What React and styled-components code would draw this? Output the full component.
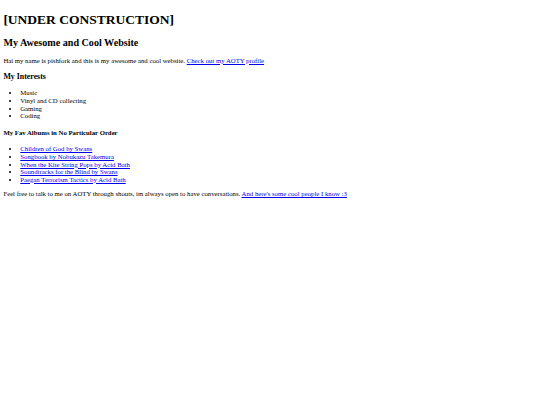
import React from 'react'
import styled, { createGlobalStyle } from 'styled-components'

// page was laid out at 1280px wide and shown at 540px
const s = 540 / 1280
const px = n => `${n * s}px`

const GlobalStyle = createGlobalStyle`
  body {
    margin: ${px(8)};
    font-family: "Liberation Serif", "Times New Roman", serif;
    font-size: ${px(16)};
    line-height: ${px(18)};
    color: #000;
    background: #fff;
  }
`

const Title = styled.h1`
  font-size: ${px(32)};
  line-height: ${px(37)};
  margin: ${px(21.44)} 0;
`

const Subtitle = styled.h2`
  font-size: ${px(24)};
  line-height: ${px(27)};
  margin: ${px(19.92)} 0;
`

const SectionTitle = styled.h3`
  font-size: ${px(18.72)};
  line-height: ${px(22)};
  margin: ${px(18.72)} 0;
`

const SmallTitle = styled.h4`
  font-size: ${px(16)};
  line-height: ${px(18)};
  margin: ${px(21.28)} 0;
`

const Para = styled.p`
  margin: ${px(16)} 0;
`

const List = styled.ul`
  margin: ${px(16)} 0;
  padding-left: ${px(40)};
  list-style: disc;
`

const Link = styled.a`
  color: #0000ee;
  text-decoration: underline;
`

const interests = ['Music', 'Vinyl and CD collecting', 'Gaming', 'Coding']

const albums = [
  'Children of God by Swans',
  'Songbook by Nobukazu Takemura',
  'When the Kite String Pops by Acid Bath',
  'Soundtracks for the Blind by Swans',
  'Paegan Terrorism Tactics by Acid Bath',
]

const App = () => (
  <>
    <GlobalStyle />
    <Title>[UNDER CONSTRUCTION]</Title>
    <Subtitle>My Awesome and Cool Website</Subtitle>
    <Para>
      Hai my name is pishfork and this is my awesome and cool website.{' '}
      <Link href="#">Check out my AOTY profile</Link>
    </Para>
    <SectionTitle>My Interests</SectionTitle>
    <List>
      {interests.map(i => (
        <li key={i}>{i}</li>
      ))}
    </List>
    <SmallTitle>My Fav Albums in No Particular Order</SmallTitle>
    <List>
      {albums.map(a => (
        <li key={a}>
          <Link href="#">{a}</Link>
        </li>
      ))}
    </List>
    <Para>
      Feel free to talk to me on AOTY through shouts, im always open to have conversations.{' '}
      <Link href="#">And here's some cool people I know :3</Link>
    </Para>
  </>
)

export default App
